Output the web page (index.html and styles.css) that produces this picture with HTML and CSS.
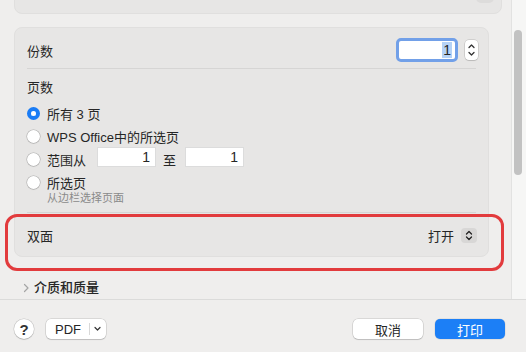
FILE: index.html
```html
<!DOCTYPE html>
<html lang="zh-CN">
<head>
  <meta charset="UTF-8" />
  <meta name="viewport" content="width=device-width, initial-scale=1.0"/>
  <title>打印</title>
  <link rel="stylesheet" href="styles.css">
</head>
<body>
  <div class="window">
    <div class="content">
      <div class="scroll">
        <!-- 上一个面板（已滚出视图） -->
        <div class="panel panel-top"><span class="top-btn"></span></div>

        <div class="panel options">
          <div class="row copies">
            <span>份数</span>
            <div class="copies-field">
              <div class="focus-input"><span class="sel">1</span></div>
              <span class="stepper">
                <svg width="13" height="20" viewBox="0 0 13 20"><path d="M4 7.5 6.5 5 9 7.5M4 12.5 6.5 15 9 12.5" fill="none" stroke="#333" stroke-width="1.3" stroke-linecap="round" stroke-linejoin="round"/></svg>
              </span>
            </div>
          </div>

          <div class="pages">
            <div class="label">页数</div>
            <div class="radio-row"><span class="radio on"></span>所有 3 页</div>
            <div class="radio-row"><span class="radio"></span>WPS Office中的所选页</div>
            <div class="radio-row">
              <span class="radio"></span>范围从
              <span class="num-input first">1</span>
              <span class="to">至</span>
              <span class="num-input">1</span>
            </div>
            <div class="radio-row"><span class="radio"></span>所选页</div>
            <div class="hint">从边栏选择页面</div>
          </div>

          <div class="row duplex">
            <span>双面</span>
            <div class="popup">
              打开
              <span class="popup-arrows">
                <svg width="16" height="15" viewBox="0 0 16 15"><path d="M5.5 6 8 3.5 10.5 6M5.5 9 8 11.5 10.5 9" fill="none" stroke="#222" stroke-width="1.3" stroke-linecap="round" stroke-linejoin="round"/></svg>
              </span>
            </div>
          </div>
        </div>

        <div class="disclosure">
          <svg width="8" height="10" viewBox="0 0 8 10"><path d="M2.5 1.5 6 5 2.5 8.5" fill="none" stroke="#a5a5a5" stroke-width="1.2" stroke-linecap="round" stroke-linejoin="round"/></svg>
          介质和质量
        </div>

        <!-- 红色标注框 -->
        <div class="highlight"></div>
      </div>
      <div class="scrollbar"><div class="thumb"></div></div>
    </div>

    <div class="footer">
      <div class="footer-left">
        <button class="help">?</button>
        <button class="pdf">PDF<span class="pdf-sep"></span><svg width="9" height="6" viewBox="0 0 9 6"><path d="M2 1.5 4.5 4 7 1.5" fill="none" stroke="#333" stroke-width="1.2" stroke-linecap="round" stroke-linejoin="round"/></svg></button>
      </div>
      <div class="footer-right">
        <button class="btn cancel">取消</button>
        <button class="btn print">打印</button>
      </div>
    </div>
  </div>
</body>
</html>
```

FILE: styles.css
```css
* {
  box-sizing: border-box;
}

body {
  margin: 0;
  background: #efeeed;
  color: #262626;
  font-family: "Liberation Sans", "Noto Sans CJK SC", sans-serif;
  font-size: 13px;
}

.window {
  width: 526px;
  height: 352px;
  overflow: hidden;
}

.content {
  display: flex;
  height: 299px;
}

.scroll {
  position: relative;
  width: 511px;
  height: 299px;
  overflow: hidden;
  padding-left: 14px;
}

.panel {
  background: #e7e6e5;
  border: 1px solid #e0dfde;
  border-radius: 8px;
}

.panel-top {
  width: 488px;
  height: 40px;
  margin-top: -26px;
  display: flex;
  justify-content: flex-end;
  align-items: flex-end;
  padding: 0 7px 10px 0;
}

.top-btn {
  width: 18px;
  height: 20px;
  border-radius: 5px;
  background: #dddcdb;
}

.options {
  width: 475px;
  margin-top: 13px;
  padding: 0 12px;
}

.row {
  display: flex;
  justify-content: space-between;
  align-items: center;
}

.copies {
  height: 41px;
  padding-top: 4px;
  border-bottom: 1px solid #d6d5d4;
}

.copies-field {
  display: flex;
  align-items: center;
  gap: 7px;
  margin-right: -2px;
}

.focus-input {
  width: 62px;
  height: 24px;
  border: 3px solid #72a0e8;
  border-radius: 5px;
  background: #fff;
  display: flex;
  justify-content: flex-end;
  align-items: center;
  padding-right: 3px;
  font-size: 14px;
}

.sel {
  background: #b5d2f6;
  line-height: 16px;
  padding: 0 1px;
}

.stepper {
  display: flex;
  width: 13px;
  height: 20px;
  background: #fff;
  border-radius: 4px;
  box-shadow: 0 0 0 0.5px rgba(0, 0, 0, 0.2), 0 1px 1px rgba(0, 0, 0, 0.1);
}

.pages {
  padding-top: 10px;
  border-bottom: 1px solid #d6d5d4;
  height: 144px;
}

.label {
  line-height: 18px;
  margin-bottom: 5px;
}

.radio-row {
  display: flex;
  align-items: center;
  height: 23px;
}

.radio {
  width: 13px;
  height: 13px;
  border-radius: 50%;
  background: #fff;
  box-shadow: 0 0 0 0.5px rgba(0, 0, 0, 0.25), 0 1px 1px rgba(0, 0, 0, 0.08);
  margin-right: 7px;
  flex-shrink: 0;
}

.radio.on {
  background: #1a7cf5;
  box-shadow: none;
  border: 4px solid #1a7cf5;
  background-clip: padding-box;
  position: relative;
}

.radio.on::after {
  content: "";
  position: absolute;
  inset: 0;
  border-radius: 50%;
  background: #fff;
}

.num-input {
  width: 59px;
  height: 20px;
  background: #fff;
  border: 1px solid #dcdcdc;
  text-align: right;
  padding-right: 5px;
  line-height: 18px;
  font-size: 14px;
  margin-bottom: 5px;
}

.num-input.first {
  margin-left: 11px;
}

.to {
  width: 31px;
  text-align: center;
  margin-left: -2px;
}

.hint {
  font-size: 11px;
  color: #8a8a8a;
  line-height: 14px;
  margin: -3px 0 0 20px;
}

.duplex {
  height: 43px;
  padding-top: 2px;
}

.popup {
  display: flex;
  align-items: center;
  gap: 7px;
  margin-right: -1px;
}

.popup-arrows {
  display: flex;
  width: 16px;
  height: 15px;
  border-radius: 4px;
  background: #d8d7d6;
}

.disclosure {
  display: flex;
  align-items: center;
  gap: 4px;
  margin: 22px 0 0 8px;
  line-height: 18px;
  font-weight: 500;
}

.highlight {
  position: absolute;
  left: 5px;
  top: 214px;
  width: 499px;
  height: 57px;
  border: 3px solid #e23b3d;
  border-radius: 12px;
}

.scrollbar {
  width: 15px;
  background: #f6f6f5;
  border-left: 1px solid #e2e2e1;
  padding: 30px 0 0 2px;
}

.thumb {
  width: 8px;
  height: 145px;
  border-radius: 4px;
  background: #c2c2c2;
}

.footer {
  border-top: 1px solid #dbdbda;
  display: flex;
  justify-content: space-between;
  padding: 19px 21px 0 14px;
}

.footer-left,
.footer-right {
  display: flex;
  gap: 12px;
}

button {
  font-family: inherit;
  font-size: 13px;
  border: none;
  background: #fff;
  color: #262626;
  height: 20px;
  padding: 0;
  box-shadow: 0 0 0 0.5px rgba(0, 0, 0, 0.18), 0 1px 1px rgba(0, 0, 0, 0.12);
}

.help {
  width: 20px;
  border-radius: 50%;
  font-size: 15px;
  font-weight: bold;
  color: #333;
}

.pdf {
  width: 60px;
  border-radius: 5px;
  display: flex;
  align-items: center;
  padding-left: 9px;
  font-size: 13px;
}

.pdf-sep {
  width: 1px;
  height: 12px;
  background: #d8d8d8;
  margin: 0 3px 0 8px;
}

.btn {
  width: 70px;
  border-radius: 5px;
}

.print {
  background: #1c7ff6;
  color: #fff;
  box-shadow: 0 0 0 0.5px rgba(0, 0, 0, 0.1);
}
```
